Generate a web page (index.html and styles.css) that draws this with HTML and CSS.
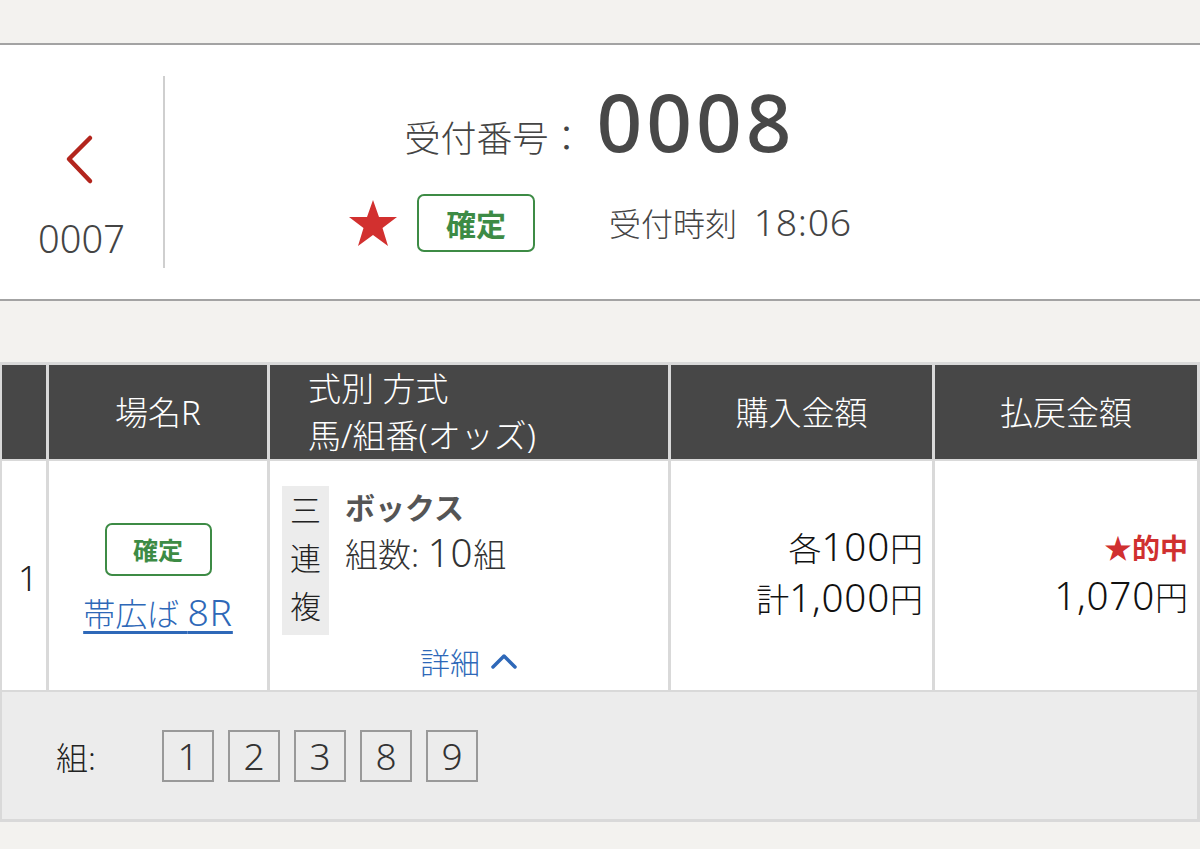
FILE: index.html
```html
<!DOCTYPE html>
<html lang="ja">
  <head>
    <meta charset="UTF-8" />
    <title>投票内容照会</title>
    <link rel="stylesheet" href="styles.css">
  </head>
  <body>
    <div class="top-space"></div>

    <header class="ticket-head">
      <a class="prev" href="#">
        <svg class="chevron" width="30" height="52" viewBox="0 0 30 52">
          <polyline points="25,4 4,25 25,47" />
        </svg>
        <span class="prev-no">0007</span>
      </a>
      <div class="head-main">
        <div class="receipt">
          <span class="receipt-label">受付番号：</span>
          <span class="receipt-no">0008</span>
        </div>
        <div class="status-line">
          <svg class="star" width="50" height="48" viewBox="0 0 50 48">
            <polygon points="25,1 31,18 49,18 34.5,29 40,47 25,36 10,47 15.5,29 1,18 19,18" />
          </svg>
          <span class="badge badge-lg">確定</span>
          <span class="time">受付時刻&nbsp; <span class="num">18:06</span></span>
        </div>
      </div>
    </header>

    <div class="gap-space"></div>

    <div class="bets">
      <div class="th"></div>
      <div class="th center">場名R</div>
      <div class="th left">式別 方式<br />馬/組番(オッズ)</div>
      <div class="th center">購入金額</div>
      <div class="th center">払戻金額</div>

      <div class="td no"><span class="num">1</span></div>
      <div class="td race">
        <span class="badge badge-sm">確定</span>
        <a class="race-link" href="#">帯広ば <span class="num">8R</span></a>
      </div>
      <div class="td kind">
        <div class="kind-row">
          <div class="kind-tag">三<br />連<br />複</div>
          <div class="kind-info">
            <div class="method">ボックス</div>
            <div>組数:&nbsp;<span class="num">10</span>組</div>
          </div>
        </div>
        <a class="detail" href="#">詳細
          <svg width="28" height="18" viewBox="0 0 28 18">
            <polyline points="3,15 14,4 25,15" />
          </svg>
        </a>
      </div>
      <div class="td money">
        <div>各<span class="num">100</span>円</div>
        <div>計<span class="num">1,000</span>円</div>
      </div>
      <div class="td money">
        <div class="hit">★的中</div>
        <div><span class="num">1,070</span>円</div>
      </div>

      <div class="combo">
        <span class="combo-label">組:</span>
        <span class="horse">1</span>
        <span class="horse">2</span>
        <span class="horse">3</span>
        <span class="horse">8</span>
        <span class="horse">9</span>
      </div>
    </div>
  </body>
</html>
```

FILE: styles.css
```css
body {
  margin: 0;
  background-color: #f3f2ef;
  font-family: "Noto Sans", "Noto Sans CJK JP", sans-serif;
  font-weight: 300;
  color: #222;
}
a {
  text-decoration: none;
}
/* latin digits run small next to kanji, so bump them up */
.num {
  font-size: 1.17em;
  letter-spacing: 0.02em;
}
.top-space {
  height: 43px;
}
.gap-space {
  height: 61px;
}

/* ticket header */
.ticket-head {
  display: grid;
  grid-template-columns: 165px 1fr 165px;
  height: 254px;
  background-color: #fff;
  border-top: 2px solid #a3a3a3;
  border-bottom: 2px solid #a3a3a3;
}
.prev {
  display: flex;
  flex-direction: column;
  align-items: center;
  margin: 31px 0;
  border-right: 2px solid #cfcfcf;
  color: #444;
}
.chevron {
  margin: 58px 0 0 -4px;
}
.chevron polyline {
  fill: none;
  stroke: #b3251d;
  stroke-width: 4.5;
  stroke-linecap: round;
  stroke-linejoin: round;
}
.prev-no {
  margin-top: 33px;
  font-size: 38px;
  line-height: 1;
}
.head-main {
  display: flex;
  flex-direction: column;
  align-items: center;
  padding-top: 36px;
}
.receipt {
  display: flex;
  align-items: baseline;
  color: #444;
}
.receipt-label {
  font-size: 36px;
}
.receipt-no {
  margin-left: 12px;
  font-size: 80px;
  font-weight: 500;
  letter-spacing: 4px;
  line-height: 1;
  color: #484848;
}
.status-line {
  display: flex;
  align-items: center;
  height: 58px;
  margin-top: 31px;
}
.star polygon {
  fill: #d2302f;
}
.badge {
  display: inline-block;
  border: 2px solid #3d8b45;
  border-radius: 7px;
  color: #3d8b45;
  font-family: "Noto Sans CJK JP", sans-serif;
  font-weight: 700;
  text-align: center;
}
.badge-lg {
  margin-left: 19px;
  width: 114px;
  height: 54px;
  font-size: 30px;
  line-height: 54px;
}
.time {
  margin-left: 74px;
  font-size: 32px;
  line-height: 44px;
  color: #444;
}

/* bets table */
.bets {
  display: grid;
  grid-template-columns: 44px 218px 398px 261px 262px;
  grid-template-rows: 94px 229px 127px;
  gap: 2px 3px;
  padding: 3px 3px 3px 2px;
  background-color: #d9d9d9;
}
.th {
  display: flex;
  align-items: center;
  background-color: #474747;
  color: #fff;
  font-size: 33px;
  line-height: 47px;
}
.th.center {
  justify-content: center;
}
.th.left {
  padding-left: 38px;
}
.td {
  background-color: #fff;
  font-size: 33px;
}
.no {
  display: flex;
  align-items: center;
  padding: 2px 0 0 16px;
  font-size: 30px;
}
.race {
  display: flex;
  flex-direction: column;
  align-items: center;
  justify-content: center;
  padding-top: 8px;
}
.badge-sm {
  width: 103px;
  height: 49px;
  font-size: 25px;
  line-height: 49px;
}
.race-link {
  margin-top: 14px;
  color: #2e68b8;
  font-size: 32px;
  line-height: 44px;
  text-decoration: underline;
  text-underline-offset: 5px;
}
.kind {
  display: flex;
  flex-direction: column;
  padding: 25px 0 0 12px;
}
.kind-row {
  display: flex;
}
.kind-tag {
  width: 47px;
  padding: 0 0 5px;
  background-color: #ececec;
  font-size: 31px;
  line-height: 48px;
  text-align: center;
}
.kind-info {
  margin-left: 16px;
  font-size: 33px;
  line-height: 52px;
  color: #333;
}
.method {
  font-family: "Noto Sans CJK JP", sans-serif;
  font-weight: 700;
  color: #555;
  font-size: 30px;
  line-height: 40px;
}
.detail {
  display: flex;
  align-items: center;
  align-self: center;
  margin: 4px 0 0 -12px;
  color: #2e68b8;
  font-size: 30px;
}
.detail svg {
  margin-left: 10px;
}
.detail polyline {
  fill: none;
  stroke: #2e68b8;
  stroke-width: 3.5;
  stroke-linecap: round;
  stroke-linejoin: round;
}
.money {
  display: flex;
  flex-direction: column;
  justify-content: center;
  align-items: flex-end;
  padding: 0 9px 6px 0;
  line-height: 48px;
  color: #111;
  font-size: 33px;
}
.hit {
  color: #d0302f;
  font-family: "Noto Sans CJK JP", sans-serif;
  font-weight: 700;
  font-size: 28px;
}
.combo {
  grid-column: 1 / -1;
  display: flex;
  align-items: center;
  gap: 14px;
  padding-left: 54px;
  background-color: #ececec;
  font-size: 32px;
}
.combo-label {
  width: 92px;
  color: #222;
}
.horse {
  width: 48px;
  height: 48px;
  border: 2px solid #999;
  font-size: 37px;
  line-height: 48px;
  text-align: center;
  color: #333;
}
```
